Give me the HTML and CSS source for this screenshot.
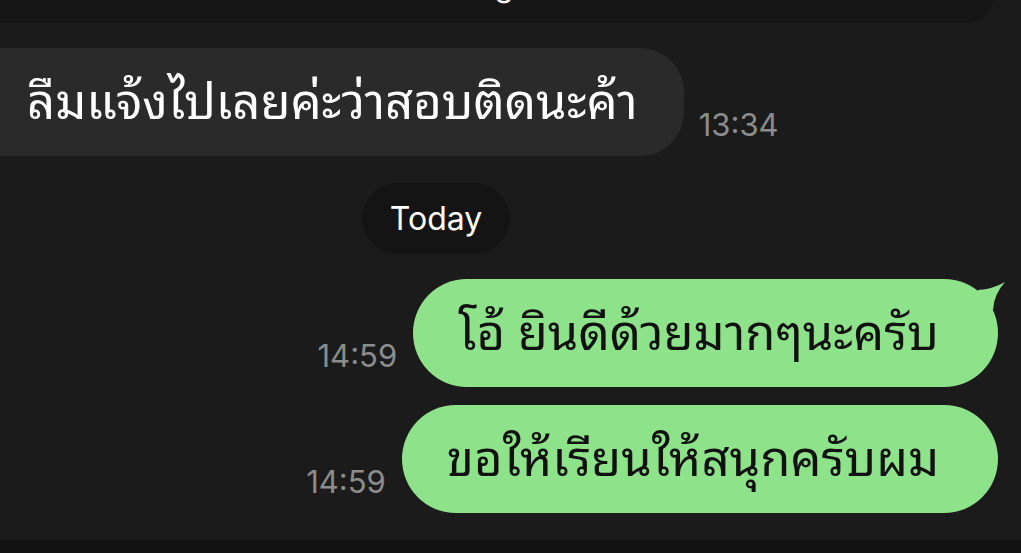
FILE: index.html
```html
<!DOCTYPE html>
<html>
<head>
    <title>Chat</title>
    <link rel="stylesheet" href="styles.css">
</head>
<body>
    <div class="chat">
        <div class="top-card"><span class="top-text">Settings</span></div>

        <div class="row row-in">
            <div class="bubble bubble-in">ลืมแจ้งไปเลยค่ะว่าสอบติดนะค้า</div>
            <span class="time time-in">13:34</span>
        </div>

        <div class="day"><span class="day-pill">Today</span></div>

        <div class="row row-out first">
            <span class="time time-out">14:59</span>
            <div class="bubble bubble-out bubble-tail">
                โอ้ ยินดีด้วยมากๆนะครับ
                <svg class="tail" width="40" height="40" viewBox="0 0 40 40">
                    <path d="M10 11 Q25 10 37 3 Q26 15 25 31 L10 31 Z" fill="#8ee38a"/>
                </svg>
            </div>
        </div>

        <div class="row row-out second">
            <span class="time time-out">14:59</span>
            <div class="bubble bubble-out">ขอให้เรียนให้สนุกครับผม</div>
        </div>
    </div>
    <div class="bottom-bar"></div>
</body>
</html>
```

FILE: styles.css
```css
html, body {
    margin: 0;
    height: 100%;
}
body {
    background-color: #1b1b1b;
    font-family: "Noto Sans Thai Looped", "Noto Sans Thai", "Noto Sans", "Inter", sans-serif;
    overflow: hidden;
    display: flex;
    flex-direction: column;
}
.chat {
    flex: 1;
    display: flex;
    flex-direction: column;
}
.top-card {
    height: 70px;
    margin-top: -47px;
    margin-right: 28px;
    background: #161616;
    border-radius: 0 0 26px 0;
    color: #fff;
    font-family: "Inter", sans-serif;
    font-size: 30px;
    line-height: 66px;
    padding-left: 414px;
}
.row {
    display: flex;
    align-items: flex-end;
}
.row-in {
    margin-top: 25px;
}
.bubble {
    height: 108px;
    box-sizing: border-box;
    display: flex;
    align-items: center;
    font-size: 49px;
    white-space: nowrap;
    padding-bottom: 10px;
}
.bubble-in {
    background: #2a2a2a;
    color: #fff;
    margin-left: -40px;
    padding-left: 67px;
    padding-right: 46px;
    border-radius: 44px;
}
.time {
    font-family: "Inter", sans-serif;
    font-size: 31px;
    color: #8c8c8c;
    line-height: 1;
}
.time-in {
    margin-left: 15px;
    padding-bottom: 16px;
}
.time-out {
    margin-right: 16px;
    padding-bottom: 16px;
}
.day {
    margin-top: 27px;
    padding-left: 362px;
    display: flex;
}
.day-pill {
    width: 148px;
    height: 71px;
    box-sizing: border-box;
    display: flex;
    align-items: center;
    justify-content: center;
    background: #141414;
    color: #fff;
    border-radius: 36px;
    font-family: "Inter", sans-serif;
    font-size: 32px;
}
.row-out {
    justify-content: flex-end;
    padding-right: 23px;
}
.row-out.first {
    margin-top: 25px;
}
.row-out.second {
    margin-top: 18px;
}
.bubble-out {
    background: #8ee38a;
    color: #111;
    border-radius: 54px;
    padding-left: 45px;
    padding-right: 59px;
    position: relative;
}
.tail {
    position: absolute;
    right: -10px;
    top: 0;
}
.bottom-bar {
    height: 13px;
    background: #111;
}
```
